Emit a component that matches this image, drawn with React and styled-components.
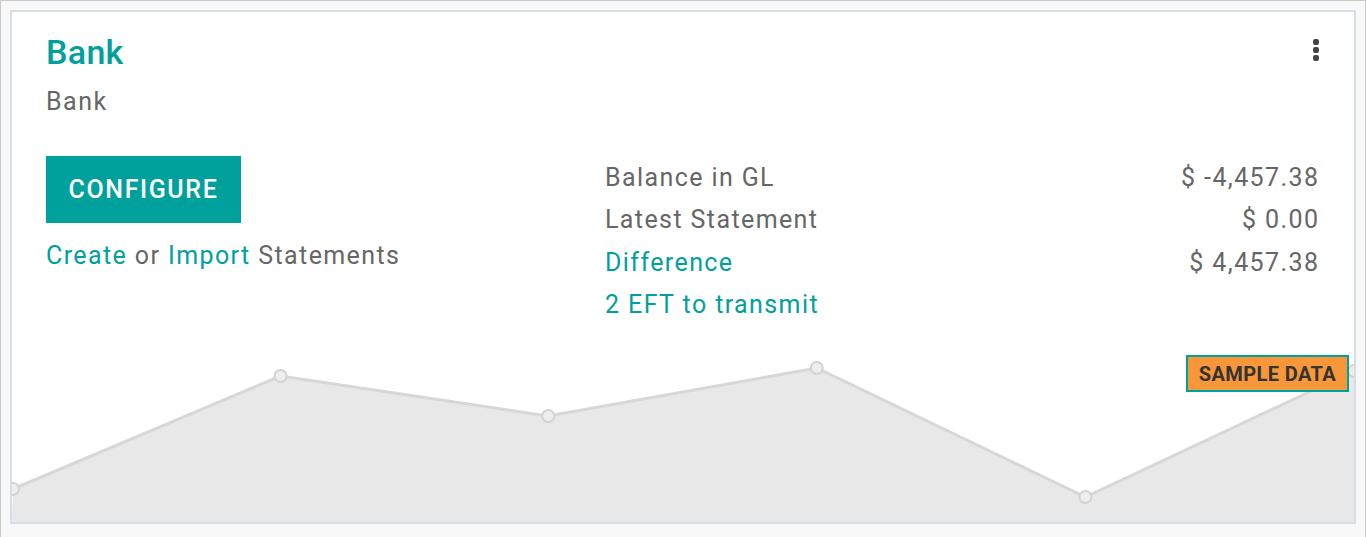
import React from "react";
import styled, { createGlobalStyle } from "styled-components";

const teal = "#00a09d";

const GlobalStyle = createGlobalStyle`
  html, body {
    margin: 0;
    padding: 0;
    background: #f9f9f9;
  }
  body {
    font-family: Roboto, "Liberation Sans", sans-serif;
    color: #666;
  }
`;

const Frame = styled.div`
  box-sizing: border-box;
  height: 537px;
  padding: 9px 9px 14px 9px;
  border: 1px solid #cacaca;
  border-bottom: none;
  background: #f8f8f8;
`;

const Card = styled.div`
  position: relative;
  box-sizing: border-box;
  height: 514px;
  display: flex;
  flex-direction: column;
  background: #fff;
  border: 2px solid #d6dde5;
  overflow: hidden;
`;

const Header = styled.div`
  padding: 20px 36px 0 34px;
`;

const Title = styled.div`
  font-size: 34px;
  font-weight: 500;
  line-height: 40px;
  letter-spacing: 0.3px;
  color: ${teal};
`;

const Subtitle = styled.div`
  font-size: 25px;
  line-height: 32px;
  letter-spacing: 1.5px;
  margin-top: 14px;
  color: #666;
`;

const Kebab = styled.button`
  position: absolute;
  top: 26px;
  right: 34px;
  padding: 0;
  border: 0;
  background: none;
  display: flex;
`;

const Body = styled.div`
  display: grid;
  grid-template-columns: 559px 1fr;
  padding: 38px 36px 0 34px;
`;

const LeftCol = styled.div`
  display: flex;
  flex-direction: column;
  align-items: flex-start;
`;

const ConfigureButton = styled.button`
  box-sizing: border-box;
  width: 195px;
  height: 67px;
  padding: 0;
  border: 0;
  border-radius: 0;
  background: ${teal};
  color: #fff;
  font-family: Roboto, "Liberation Sans", sans-serif;
  font-size: 25px;
  font-weight: 500;
  text-transform: uppercase;
  letter-spacing: 1.6px;
`;

const Actions = styled.div`
  margin-top: 17px;
  font-size: 25px;
  line-height: 32px;
  letter-spacing: 1.4px;
  color: #666;
`;

const Link = styled.a`
  color: ${teal};
  text-decoration: none;
`;

const Stats = styled.div`
  display: flex;
  flex-direction: column;
  padding-top: 1px;
`;

const StatRow = styled.div`
  display: flex;
  justify-content: space-between;
  font-size: 25px;
  line-height: 42.4px;
  letter-spacing: 1.4px;
  color: ${({ $link }) => ($link ? teal : "#666")};
`;

const Amount = styled.span`
  color: #666;
  margin-right: -1.4px;
`;

const Chart = styled.svg`
  display: block;
  margin-top: auto;
  width: 100%;
  height: 165px;
`;

const SampleBadge = styled.div`
  position: absolute;
  top: 343px;
  right: 5px;
  box-sizing: border-box;
  width: 163px;
  height: 37px;
  display: flex;
  align-items: center;
  justify-content: center;
  background: #f8963a;
  border: 2px solid ${teal};
  color: #333;
  font-size: 20px;
  font-weight: 700;
  letter-spacing: 0.4px;
  text-transform: uppercase;
`;

const points = [
  [1, 132],
  [269, 19],
  [537, 59],
  [806, 11],
  [1075, 140],
  [1344, 14],
];

const stats = [
  { label: "Balance in GL", amount: "$ -4,457.38" },
  { label: "Latest Statement", amount: "$ 0.00" },
  { label: "Difference", amount: "$ 4,457.38", link: true },
  { label: "2 EFT to transmit", link: true },
];

const KebabIcon = () => (
  <svg width="8" height="24" viewBox="0 0 8 24">
    <rect x="1" y="1" width="6" height="6" rx="2.2" fill="#444" />
    <rect x="1" y="9" width="6" height="6" rx="2.2" fill="#444" />
    <rect x="1" y="17" width="6" height="6" rx="2.2" fill="#444" />
  </svg>
);

const LineChart = () => {
  const line = points.map(([x, y]) => `${x},${y}`).join(" ");
  const area = `0,165 ${line} 1344,165`;
  return (
    <Chart viewBox="0 0 1344 165" preserveAspectRatio="none">
      <polygon points={area} fill="#e8e8e8" />
      <polyline points={line} fill="none" stroke="#d7d7d7" strokeWidth="3" />
      {points.map(([x, y]) => (
        <circle key={x} cx={x} cy={y} r="6" fill="#eeeeee" stroke="#d3d3d3" strokeWidth="2" />
      ))}
    </Chart>
  );
};

export default function App() {
  return (
    <>
      <GlobalStyle />
      <Frame>
        <Card>
          <Header>
            <Title>Bank</Title>
            <Subtitle>Bank</Subtitle>
          </Header>
          <Kebab aria-label="Manage">
            <KebabIcon />
          </Kebab>
          <Body>
            <LeftCol>
              <ConfigureButton>Configure</ConfigureButton>
              <Actions>
                <Link href="#">Create</Link> or <Link href="#">Import</Link> Statements
              </Actions>
            </LeftCol>
            <Stats>
              {stats.map((s) => (
                <StatRow key={s.label} $link={s.link}>
                  <span>{s.label}</span>
                  {s.amount && <Amount>{s.amount}</Amount>}
                </StatRow>
              ))}
            </Stats>
          </Body>
          <LineChart />
          <SampleBadge>Sample data</SampleBadge>
        </Card>
      </Frame>
    </>
  );
}
